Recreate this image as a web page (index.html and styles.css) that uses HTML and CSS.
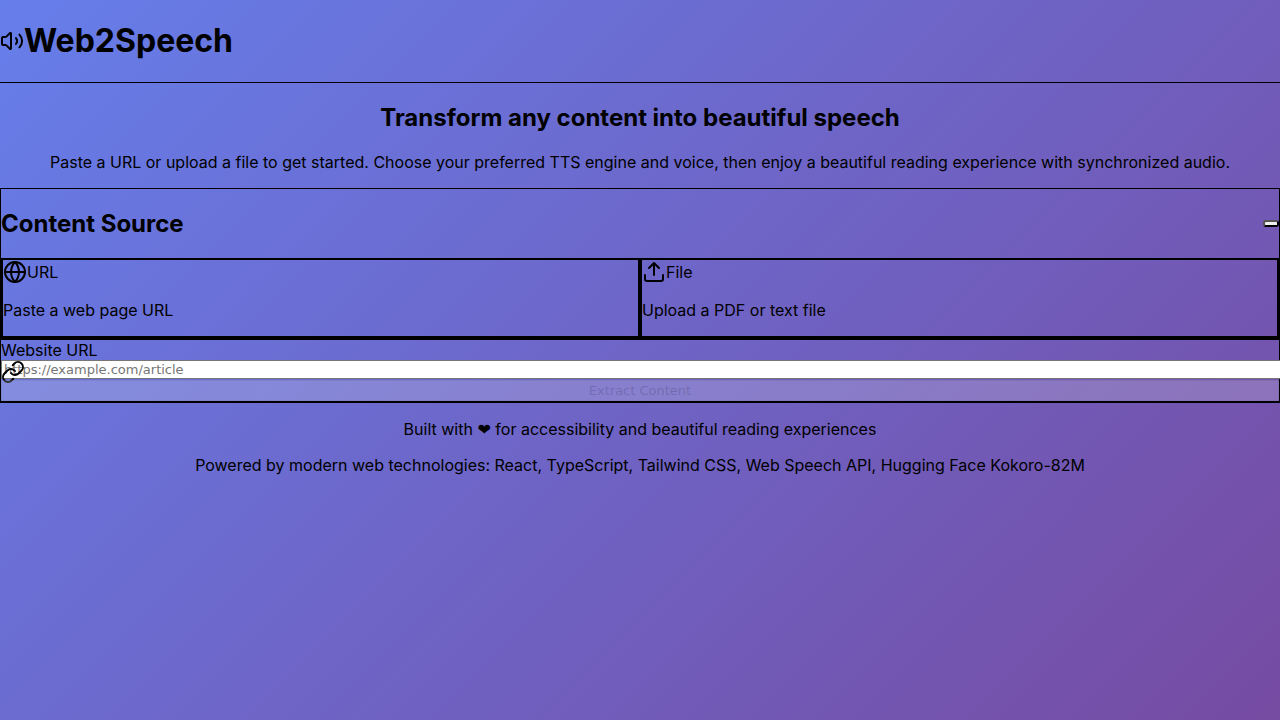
FILE: index.html
```html
<!DOCTYPE html>
<html lang="en">
<head>
<meta charset="utf-8">
<meta name="viewport" content="width=device-width, initial-scale=1">
<title>Web2Speech</title>
<link rel="stylesheet" href="styles.css">
</head>
<body>
<header class="header">
  <svg class="icon" viewBox="0 0 24 24" aria-hidden="true"><path d="M11 4.7a.7.7 0 0 0-1.2-.5L6.4 7.6A1.4 1.4 0 0 1 5.4 8H3a1 1 0 0 0-1 1v6a1 1 0 0 0 1 1h2.4a1.4 1.4 0 0 1 1 .4l3.4 3.4a.7.7 0 0 0 1.2-.5z"/><path d="M16 9a5 5 0 0 1 0 6"/><path d="M19.4 18.4a9 9 0 0 0 0-12.8"/></svg>
  <h1 class="brand">Web2Speech</h1>
</header>
<main>
  <section class="hero">
    <h2 class="heading">Transform any content into beautiful speech</h2>
    <p class="text">Paste a URL or upload a file to get started. Choose your preferred TTS engine and voice, then enjoy a beautiful reading experience with synchronized audio.</p>
  </section>
  <section class="card">
    <div class="card-head">
      <h2 class="heading">Content Source</h2>
      <button class="collapse" type="button" aria-label="Collapse"></button>
    </div>
    <div class="sources">
      <button class="source" type="button">
        <span class="source-title"><svg class="icon" viewBox="0 0 24 24" aria-hidden="true"><circle cx="12" cy="12" r="10"/><path d="M2 12h20M12 2a15.3 15.3 0 0 1 4 10 15.3 15.3 0 0 1-4 10 15.3 15.3 0 0 1-4-10 15.3 15.3 0 0 1 4-10z"/></svg>URL</span>
        <span class="source-note">Paste a web page URL</span>
      </button>
      <button class="source" type="button">
        <span class="source-title"><svg class="icon" viewBox="0 0 24 24" aria-hidden="true"><path d="M21 15v4a2 2 0 0 1-2 2H5a2 2 0 0 1-2-2v-4"/><path d="m17 8-5-5-5 5M12 3v12"/></svg>File</span>
        <span class="source-note">Upload a PDF or text file</span>
      </button>
    </div>
  </section>
  <form class="card">
    <label class="label" for="url">Website URL</label>
    <div class="field">
      <svg class="icon field-icon" viewBox="0 0 24 24" aria-hidden="true"><path d="M10 13a5 5 0 0 0 7.54.54l3-3a5 5 0 0 0-7.07-7.07l-1.72 1.71"/><path d="M14 11a5 5 0 0 0-7.54-.54l-3 3a5 5 0 0 0 7.07 7.07l1.71-1.71"/></svg>
      <input class="input" id="url" type="url" placeholder="https://example.com/article">
    </div>
    <button class="submit" type="submit" disabled>Extract Content</button>
  </form>
</main>
<footer class="footer">
  <p class="text">Built with <span class="heart">❤</span> for accessibility and beautiful reading experiences</p>
  <p class="text">Powered by modern web technologies: React, TypeScript, Tailwind CSS, Web Speech API, Hugging Face Kokoro-82M</p>
</footer>
</body>
</html>
```
FILE: styles.css
```css
* { box-sizing: border-box; }
body {
  margin: 0;
  min-height: 100vh;
  overflow-x: hidden;
  font: 16px/20px Inter, sans-serif;
  text-rendering: optimizeSpeed;
  color: #000;
  background: linear-gradient(135deg, #667eea 0%, #764ba2 100%);
}
.header {
  display: flex;
  align-items: center;
  border-bottom: 1px solid #000;
}
.icon {
  width: 24px;
  height: 24px;
  flex: none;
  fill: none;
  stroke: currentColor;
  stroke-width: 2;
  stroke-linecap: round;
  stroke-linejoin: round;
}
.brand { margin: 21px 0; font-size: 32px; line-height: 40px; }
.hero { display: flow-root; text-align: center; }
.heading { margin: 20px 0; font-size: 24px; line-height: 29px; }
.text { margin: 16px 0; }
.card { border: 1px solid #000; }
.card-head {
  display: flex;
  align-items: center;
  justify-content: space-between;
}
.collapse {
  width: 16px;
  height: 7px;
  border: 2px outset #000;
  border-radius: 3px;
  padding: 0;
  background: #efefef;
}
.sources { display: grid; grid-template-columns: 1fr 1fr; }
.source {
  display: flex;
  flex-direction: column;
  gap: 16px;
  padding: 0 0 16px;
  border: 2px solid #000;
  background: none;
  color: inherit;
  font: inherit;
  text-align: left;
}
.source-title { display: flex; align-items: center; }
.label { display: block; }
.field { position: relative; height: 20px; }
.field-icon { position: absolute; top: 0; left: 0; z-index: 1; }
.input {
  display: block;
  box-sizing: content-box;
  width: 100%;
  height: 15px;
  padding: 1px 2px;
  border: 1px solid #767676;
  background: #fff;
  font: 13px/15px "DejaVu Sans", sans-serif;
}
.input::placeholder { color: #757575; }
.submit {
  position: relative;
  z-index: 2;
  display: block;
  width: 100%;
  height: 21px;
  padding: 0 6px;
  border: 1px solid rgba(118, 118, 118, 0.3);
  border-radius: 2px;
  background: rgba(239, 239, 239, 0.4);
  color: rgba(16, 16, 16, 0.3);
  font: 13px/16px "DejaVu Sans", sans-serif;
  opacity: 0.5;
}
.heart { font-family: "DejaVu Sans", sans-serif; line-height: 1; }
.footer {
  display: flow-root;
  border-top: 1px solid #000;
  text-align: center;
}
```
